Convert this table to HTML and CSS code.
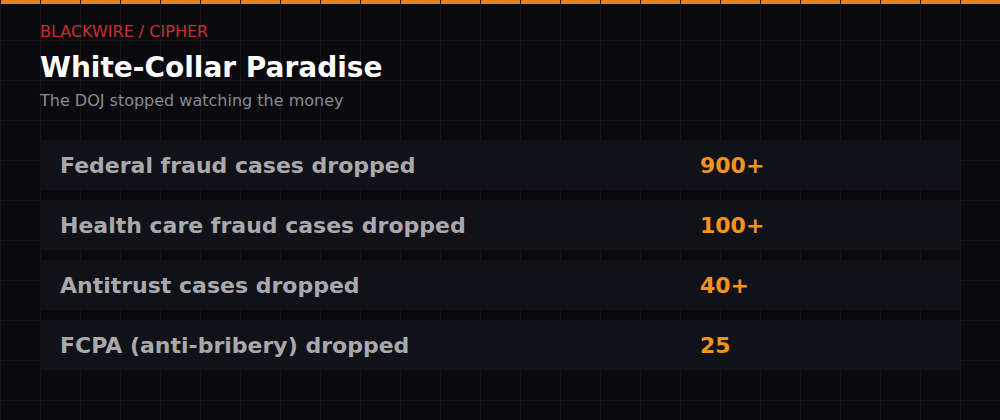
FILE: index.html
```html
<!DOCTYPE html>
<html lang="en">
<head>
<meta charset="utf-8">
<title>White-Collar Paradise</title>
<link rel="stylesheet" href="styles.css">
</head>
<body>
<div class="topbar"></div>
<main class="page">
  <header class="header">
    <div class="kicker">BLACKWIRE / CIPHER</div>
    <h1 class="title">White-Collar Paradise</h1>
    <p class="subtitle">The DOJ stopped watching the money</p>
  </header>
  <section class="rows">
    <div class="row"><span class="label">Federal fraud cases dropped</span><span class="value">900+</span></div>
    <div class="row"><span class="label">Health care fraud cases dropped</span><span class="value">100+</span></div>
    <div class="row"><span class="label">Antitrust cases dropped</span><span class="value">40+</span></div>
    <div class="row"><span class="label">FCPA (anti-bribery) dropped</span><span class="value">25</span></div>
  </section>
</main>
</body>
</html>
```

FILE: styles.css
```css
html, body {
  margin: 0;
  padding: 0;
}
body {
  width: 1000px;
  height: 420px;
  overflow: hidden;
  background-color: #0a0a0e;
  background-image:
    linear-gradient(90deg, #15151b 1px, transparent 1px),
    linear-gradient(180deg, #15151b 1px, transparent 1px);
  background-size: 40px 40px;
  font-family: "DejaVu Sans", "Liberation Sans", sans-serif;
}
.topbar {
  height: 4px;
  background: repeating-linear-gradient(90deg, #0a0a0e 0 1px, #e8821e 1px 40px);
}
.page {
  padding: 18px 40px 0 40px;
}
.kicker {
  color: #c8302f;
  font-size: 16px;
  line-height: 20px;
}
.title {
  margin: 9px 0 0 0;
  color: #ffffff;
  font-size: 28px;
  font-weight: bold;
  line-height: 34px;
}
.subtitle {
  margin: 6px 0 0 0;
  color: #8a8a90;
  font-size: 16px;
  line-height: 20px;
}
.rows {
  margin-top: 29px;
  width: 920px;
  display: flex;
  flex-direction: column;
  gap: 10px;
}
.row {
  height: 50px;
  background: #111217;
  display: grid;
  grid-template-columns: 1fr 240px;
  align-items: center;
  padding: 0 20px;
}
.label {
  color: #a9a9ad;
  font-size: 22px;
  font-weight: bold;
}
.value {
  color: #f7921c;
  font-size: 22px;
  font-weight: bold;
}
```
